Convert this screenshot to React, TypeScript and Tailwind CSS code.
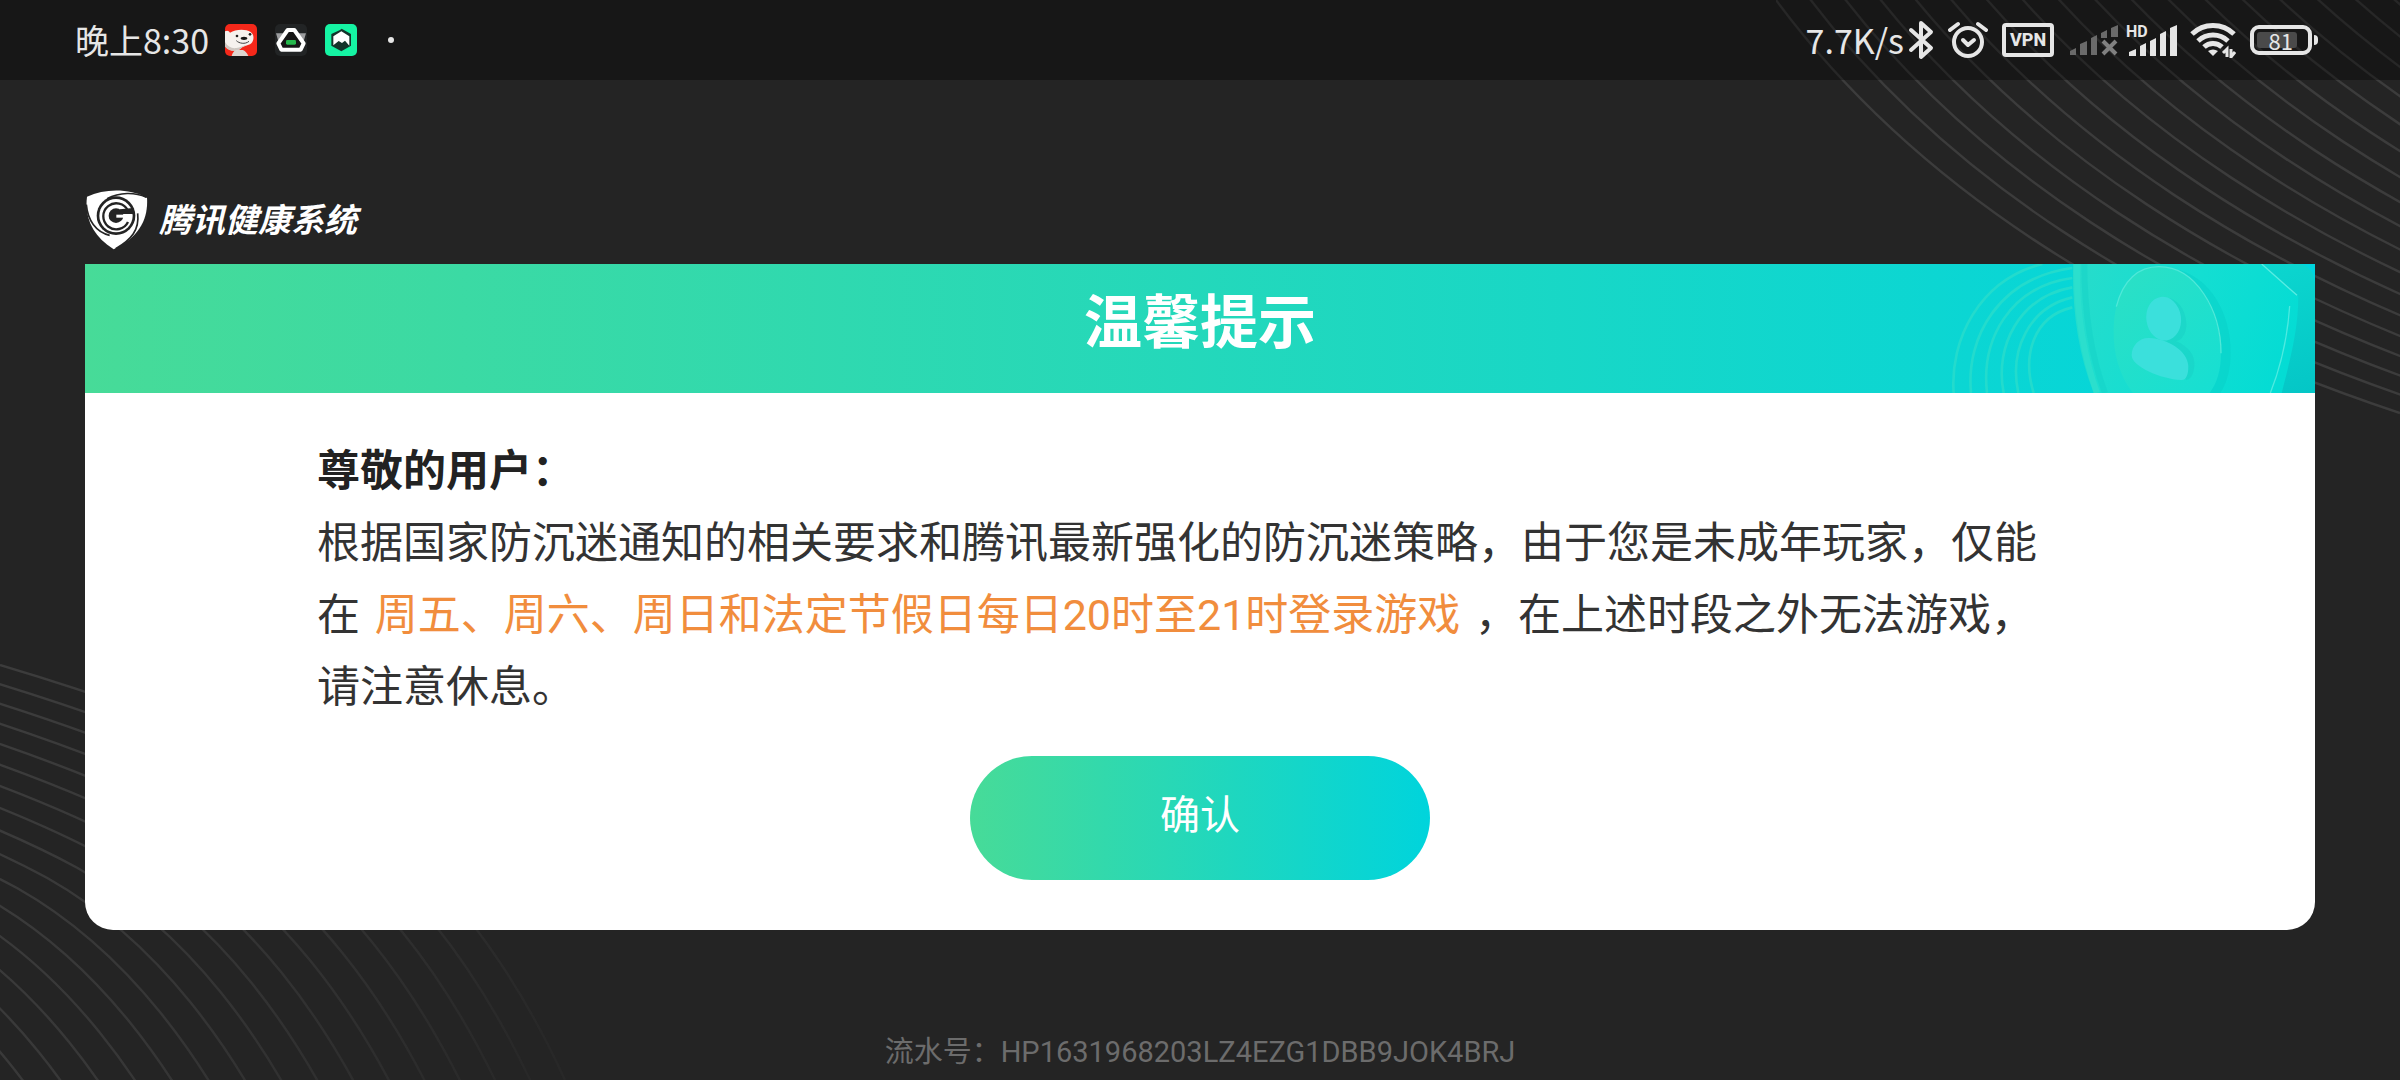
import React from 'react';

const TOP_LINES = Array.from({ length: 19 }, (_, i) => i);
const BOTTOM_LINES = Array.from({ length: 16 }, (_, i) => i);

function TopRightLines() {
  return (
    <svg className="pointer-events-none absolute top-0 right-0" width="624" height="430" viewBox="0 0 624 430" fill="none" aria-hidden="true">
      {TOP_LINES.map((i) => (
        <path
          key={i}
          d="M0 0C134 181 346 321 624 413"
          transform={`translate(${i * 28} ${i * -9})`}
          stroke="#3c3c3c"
          strokeWidth="2.4"
        />
      ))}
    </svg>
  );
}

function BottomLeftLines() {
  return (
    <svg className="pointer-events-none absolute bottom-0 left-0" width="570" height="416" viewBox="0 664 570 416" fill="none" aria-hidden="true">
      <defs>
        <linearGradient id="line-fade" gradientUnits="userSpaceOnUse" x1="0" y1="760" x2="560" y2="1000">
          <stop offset="0" stopColor="#3c3c3c" />
          <stop offset="0.4" stopColor="#363636" />
          <stop offset="1" stopColor="#282828" />
        </linearGradient>
        <mask id="line-mask" maskUnits="userSpaceOnUse" x="0" y="660" width="570" height="420">
          {BOTTOM_LINES.map((i) => (
            <path
              key={i}
              d="M0 665C150 710 250 750 320 788C430 850 510 960 565 1080"
              transform={`translate(${i * -30.3} ${i * 10})`}
              stroke="#fff"
              strokeWidth="2.4"
              fill="none"
            />
          ))}
        </mask>
      </defs>
      <rect x="0" y="660" width="570" height="420" fill="url(#line-fade)" mask="url(#line-mask)" />
    </svg>
  );
}

function DogAppIcon() {
  return (
    <svg width="32" height="32" viewBox="0 0 96 96" aria-hidden="true">
      <clipPath id="dog-clip">
        <rect width="96" height="96" rx="15" />
      </clipPath>
      <g clipPath="url(#dog-clip)">
        <rect width="96" height="96" fill="#f5281a" />
        <path d="M20 96c2-8 6-14 12-18h22c8 4 12 10 16 18z" fill="#ddd6d0" />
        <path d="M0 22c6-4 12-2 15 4 16-10 46-12 62-2 12 8 10 26 2 34-10 8-24 8-30 14-8 10-34 14-49-6z" fill="#f6f2ee" />
        <path d="M0 54c8 14 20 20 34 18 12-2 20-8 34-10-8 4-14 4-19 10-8 10-34 14-49-4z" fill="#cfc8c2" />
        <circle cx="36" cy="36" r="4" fill="#222" />
        <ellipse cx="57" cy="43" rx="10" ry="5" fill="#161616" />
        <circle cx="75" cy="31" r="4" fill="#222" />
        <path d="M34 50c8 8 26 12 38 2" stroke="#444" strokeWidth="3" fill="none" />
      </g>
    </svg>
  );
}

function TriangleAppIcon() {
  return (
    <svg width="32" height="32" viewBox="0 0 96 96" aria-hidden="true">
      <rect width="96" height="96" rx="15" fill="#222425" />
      <path d="M3 28h24L10 52zM93 28H69l17 24z" fill="#9b9c9e" />
      <path d="M38 18h20l28 40-9 19H19l-9-19z" fill="#161616" stroke="#fff" strokeWidth="12" strokeLinejoin="round" />
      <rect x="33" y="48" width="30" height="14" rx="4" fill="#25b84c" />
    </svg>
  );
}

function HexAppIcon() {
  return (
    <svg width="32" height="32" viewBox="0 0 96 96" aria-hidden="true">
      <rect width="96" height="96" rx="15" fill="#15f4a3" />
      <path d="M50 14l28 16v35L49 82 19 65V30l26-12z" fill="#14342b" />
      <path d="M49 22l24 15v28L60 50l-9 7-10-6-16 13V37z" fill="#fff" />
    </svg>
  );
}

function BluetoothIcon() {
  return (
    <svg width="26" height="40" viewBox="0 0 26 40" fill="none" stroke="#e6e6e6" strokeWidth="4" strokeLinejoin="round" strokeLinecap="round" aria-hidden="true">
      <path d="M3 10l20 18-10 9V3l10 9L3 30" />
    </svg>
  );
}

function AlarmIcon() {
  return (
    <svg width="40" height="38" viewBox="0 0 40 38" fill="none" stroke="#e6e6e6" strokeLinecap="round" aria-hidden="true">
      <circle cx="20" cy="21" r="14" strokeWidth="4" />
      <path d="M2 9l8-6M38 9l-8-6" strokeWidth="4" />
      <path d="M15 19l5 5 6-5" strokeWidth="4" strokeLinejoin="round" />
    </svg>
  );
}

function NoSignalIcon() {
  return (
    <svg width="48" height="32" viewBox="0 0 48 32" aria-hidden="true">
      <path
        d="M0 31v-4l6-3v7zM10 31V20l7-3v14zM21 31V14l6-3v20zM31 14V9l6-3v8zM41 13V4l7-3v12z"
        fill="#6a6a6a"
      />
      <path d="M33 17l13 13M46 17L33 30" stroke="#808080" strokeWidth="4" />
    </svg>
  );
}

function SignalIcon() {
  return (
    <svg width="52" height="34" viewBox="0 0 52 34" aria-hidden="true">
      <text x="0" y="14" fill="#e6e6e6" fontSize="16" fontWeight="700" fontFamily="Roboto, sans-serif">
        HD
      </text>
      <path
        d="M3 33v-4l7-3v7zM14 33V23l6-3v13zM24 33V18l6-3v18zM34 33V11l6-3v25zM44 33V5l7-3v31z"
        fill="#e6e6e6"
      />
    </svg>
  );
}

function WifiIcon() {
  return (
    <svg width="46" height="36" viewBox="0 0 46 36" fill="none" stroke="#e6e6e6" strokeWidth="5" aria-hidden="true">
      <path d="M2 12a30 30 0 0 1 42 0" />
      <path d="M8 19a22 22 0 0 1 30 0" />
      <path d="M14 25a13 13 0 0 1 18 0" />
      <path d="M23 34l-5-5a8 6 0 0 1 10 0z" fill="#e6e6e6" stroke="none" />
      <path d="M37 35v-8l-4 4M41 27v8l4-5" strokeWidth="3" />
    </svg>
  );
}

function StatusBar() {
  return (
    <header className="relative flex h-20 items-center justify-between bg-black/35 pr-[82px] pl-[75px] font-['Noto_Sans_CJK_SC',sans-serif] text-[34px] leading-none text-[#e6e6e6]">
      <div className="flex items-center">
        <time className="mr-4">晚上8:30</time>
        <div className="flex items-center gap-[18px]">
          <DogAppIcon />
          <TriangleAppIcon />
          <HexAppIcon />
        </div>
        <span className="ml-[31px] size-[6px] rounded-full bg-[#e6e6e6]" />
      </div>
      <div className="flex items-center">
        <span className="mr-1">7.7K/s</span>
        <BluetoothIcon />
        <span className="ml-[14px]">
          <AlarmIcon />
        </span>
        <span className="ml-[14px] flex h-[34px] w-[52px] items-center justify-center rounded-[4px] border-4 border-[#e6e6e6] font-[Roboto] text-[18px] font-extrabold">
          VPN
        </span>
        <span className="ml-4">
          <NoSignalIcon />
        </span>
        <span className="ml-2">
          <SignalIcon />
        </span>
        <span className="ml-3">
          <WifiIcon />
        </span>
        <span className="ml-[14px] flex h-[30px] w-[62px] items-center rounded-[9px] border-4 border-[#e6e6e6] px-[3px]">
          <span className="flex h-4 w-10 items-center justify-end rounded-[3px] bg-[#4a4a4a] pr-1 text-[22px]">81</span>
        </span>
        <span className="ml-[2px] h-[10px] w-1 rounded-r bg-[#e6e6e6]" />
      </div>
    </header>
  );
}

function ShieldLogo() {
  return (
    <svg width="64" height="60" viewBox="0 0 192 180" fill="none" aria-hidden="true">
      <path d="M6 20C60-4 130-6 186 24c4 60-20 116-100 154C24 140-2 84 6 20z" fill="#fff" />
      <path d="M4 44c4 46 28 82 70 92M184 22C150 6 104 6 66 26" stroke="#242424" strokeWidth="5" />
      <path d="M158 70c6 50-20 80-66 106" stroke="#242424" strokeWidth="5" />
      <circle cx="93" cy="77" r="58" fill="#242424" />
      <circle cx="93" cy="77" r="50" fill="#fff" />
      <path d="M129 62A39 39 0 1 0 129 96" stroke="#242424" strokeWidth="7" />
      <circle cx="93" cy="77" r="22" fill="#242424" />
      <path d="M104 58l40-4v18h-40z" fill="#242424" />
      <path d="M94 74h46v9H94z" fill="#fff" />
    </svg>
  );
}

function HeaderArt() {
  return (
    <svg className="absolute top-0 right-0 h-full" width="416" height="129" viewBox="0 42 1248 387" fill="none" aria-hidden="true">
      <defs>
        <linearGradient id="shield-face" x1="540" y1="42" x2="1180" y2="300" gradientUnits="userSpaceOnUse">
          <stop offset="0" stopColor="#27dccb" />
          <stop offset="0.5" stopColor="#14ded2" />
          <stop offset="1" stopColor="#04dcd4" />
        </linearGradient>
        <linearGradient id="shield-side" x1="1100" y1="42" x2="1248" y2="429" gradientUnits="userSpaceOnUse">
          <stop offset="0" stopColor="#0cd6cf" />
          <stop offset="1" stopColor="#04c6c6" />
        </linearGradient>
        <linearGradient id="badge" x1="650" y1="100" x2="960" y2="400" gradientUnits="userSpaceOnUse">
          <stop offset="0" stopColor="#2be0c6" />
          <stop offset="1" stopColor="#17dfd2" />
        </linearGradient>
      </defs>
      <g stroke="#23dbcd" strokeWidth="8">
        <path d="M164 429C152 270 240 90 430 42" />
        <path d="M216 429C200 260 300 84 520 54" />
        <path d="M264 429C246 270 330 110 520 84" />
        <path d="M314 429C286 290 360 140 520 112" />
        <path d="M358 429C330 300 390 172 520 142" />
        <path d="M404 429C370 320 400 200 520 172" />
      </g>
      <path d="M1080 42h120q48 6 48 70v317h-140z" fill="url(#shield-side)" />
      <path d="M522 42h568l108 96c0 110-30 210-50 291H584c-46-120-64-240-62-387z" fill="url(#shield-face)" />
      <path d="M534 42c-2 140 18 270 60 387" stroke="#2bdfcd" strokeWidth="18" />
      <path d="M556 42c0 140 18 270 62 387" stroke="#12cfc6" strokeWidth="18" opacity="0.4" />
      <path d="M1088 42l106 94" stroke="#5aece2" strokeWidth="4" />
      <path d="M1172 168c-6 90-26 180-58 261" stroke="#4deae0" strokeWidth="4" />
      <path d="M840 60c110 30 164 160 154 270-2 40-14 74-30 99h-40z" fill="#08cfc8" opacity="0.5" />
      <path d="M780 50c110 0 186 130 186 260 0 50-12 90-34 119H702c-40-50-60-120-58-190 2-110 50-189 136-189z" fill="url(#badge)" />
      <path d="M652 170c20-80 66-120 128-120 110 0 186 130 186 260" stroke="#4fe8d8" strokeWidth="4" />
      <path
        d="M812 144c36 12 50 50 50 80 0 26-14 48-34 50l-20-8zM790 264c60 6 96 40 96 76 0 26-8 48-24 50z"
        fill="#17cfc6"
        opacity="0.5"
      />
      <ellipse cx="794" cy="206" rx="52" ry="66" transform="rotate(-8 794 206)" fill="#3be0dc" />
      <path d="M698 316c0-30 24-54 54-52 50 2 114 36 116 84 0 26-6 44-22 42-60-2-148-40-148-74z" fill="#3be0dc" />
    </svg>
  );
}

function App() {
  return (
    <div className="relative flex min-h-screen flex-col overflow-hidden bg-[#242424] font-[Roboto,'Noto_Sans_CJK_SC',sans-serif]">
      <TopRightLines />
      <BottomLeftLines />
      <StatusBar />

      <main className="relative flex flex-1 flex-col px-[85px] pt-[110px]">
        <div className="flex h-[60px] items-center gap-[10px] text-white">
          <ShieldLogo />
          <span className="text-[33px] leading-none font-bold italic">腾讯健康系统</span>
        </div>

        <section className="mt-[14px] overflow-hidden rounded-b-[28px] bg-white">
          <div className="relative flex h-[129px] items-center justify-center bg-linear-to-r/srgb from-[#47db98] to-[#00d5de] pb-3">
            <HeaderArt />
            <h1 className="relative text-[58px] leading-none font-bold text-white">温馨提示</h1>
          </div>

          <div className="pt-[42px] pr-[262px] pb-[33px] pl-[232px] text-[43px] leading-[72px] text-[#333]">
            <h2 className="font-bold text-[#222]">尊敬的用户：</h2>
            <p>
              根据国家防沉迷通知的相关要求和腾讯最新强化的防沉迷策略，由于您是未成年玩家，仅能在{' '}
              <span className="mx-1 text-[#f18d3d]">周五、周六、周日和法定节假日每日20时至21时登录游戏</span>{' '}
              ，在上述时段之外无法游戏，请注意休息。
            </p>
          </div>

          <div className="flex justify-center pb-[50px]">
            <button
              type="button"
              className="h-[124px] w-[460px] rounded-full bg-linear-to-r/srgb from-[#47db98] to-[#00d4dc] pb-1 text-[40px] leading-none text-white"
            >
              确认
            </button>
          </div>
        </section>
      </main>

      <footer className="relative pb-3 text-center text-[29px] leading-8 text-[#6c6c6c]">
        流水号：HP1631968203LZ4EZG1DBB9JOK4BRJ
      </footer>
    </div>
  );
}

export default App;
